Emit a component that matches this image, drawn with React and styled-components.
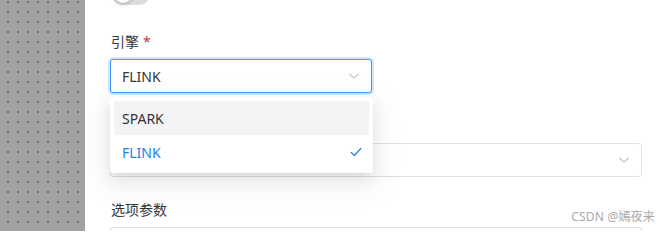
import React from "react";
import styled, { createGlobalStyle } from "styled-components";

const GlobalStyle = createGlobalStyle`
  html, body {
    margin: 0;
    padding: 0;
    width: 663px;
    height: 231px;
    overflow: hidden;
    background: #fff;
  }
  body {
    font-family: "Noto Sans", "Noto Sans CJK SC", sans-serif;
    font-size: 14px;
    color: #333639;
  }
`;

const Page = styled.div`
  display: flex;
  width: 663px;
  height: 231px;
  position: relative;
  overflow: hidden;
`;

const Backdrop = styled.div`
  width: 85px;
  flex-shrink: 0;
  background-color: #a2a2a2;
  background-image: radial-gradient(circle, #6e6e6e 0.7px, transparent 1px);
  background-size: 10px 10px;
  background-position: 3px 7px;
`;

const Panel = styled.div`
  flex: 1;
  background: #fff;
  padding: 0 21px 0 25px;
  display: flex;
  flex-direction: column;
  & > * {
    flex-shrink: 0;
  }
`;

const SwitchRail = styled.div`
  width: 38px;
  height: 22px;
  margin: -17px 0 0 2px;
  border-radius: 11px;
  background: #dcdcdf;
  position: relative;
  &::after {
    content: "";
    position: absolute;
    left: 2px;
    top: 2px;
    width: 18px;
    height: 18px;
    border-radius: 50%;
    background: #fff;
    box-shadow: 0 1px 4px rgba(0, 0, 0, 0.25);
  }
`;

const FormItem = styled.div`
  display: flex;
  flex-direction: column;
  gap: 6px;
  margin-top: ${(p) => p.$top}px;
  position: relative;
`;

const Label = styled.div`
  height: 22px;
  line-height: 22px;
  padding-left: 1px;
  font-size: 14px;
  color: #333639;
`;

const Required = styled.span`
  color: #d03050;
  margin-left: 4px;
`;

const SelectBox = styled.div`
  box-sizing: border-box;
  width: ${(p) => p.$width};
  height: 34px;
  border-radius: 3px;
  border: 1px solid ${(p) => (p.$focused ? "#4098fc" : "#e0e0e6")};
  box-shadow: ${(p) => (p.$focused ? "0 0 0 2px rgba(32,128,240,0.2)" : "none")};
  display: flex;
  align-items: center;
  justify-content: space-between;
  padding: 0 10px 0 11px;
  background: #fff;
`;

const Value = styled.span`
  font-size: 14px;
  color: #333639;
`;

const Menu = styled.div`
  position: absolute;
  top: 66px;
  left: 0;
  width: 263px;
  box-sizing: border-box;
  padding: 4px 0;
  background: #fff;
  border-radius: 3px;
  box-shadow: 0 3px 6px -4px rgba(0, 0, 0, 0.12),
    0 6px 16px 0 rgba(0, 0, 0, 0.08), 0 9px 28px 8px rgba(0, 0, 0, 0.05);
  z-index: 2;
`;

const Option = styled.div`
  height: 34px;
  display: flex;
  align-items: center;
  justify-content: space-between;
  padding: 0 10px 0 12px;
  position: relative;
  isolation: isolate;
  font-size: 14px;
  color: ${(p) => (p.$selected ? "#2080f0" : "#333639")};
  &::before {
    content: "";
    position: absolute;
    inset: 0 4px;
    border-radius: 3px;
    background: ${(p) => (p.$pending ? "#f3f3f5" : "transparent")};
    z-index: -1;
  }
`;

const Watermark = styled.div`
  position: absolute;
  right: 8px;
  bottom: 6px;
  font-size: 12px;
  color: #a9a9a9;
  letter-spacing: 0.2px;
  text-shadow: 0 0 2px #fff;
`;

const Chevron = () => (
  <svg width="14" height="14" viewBox="0 0 16 16" fill="none">
    <path d="M3 6l5 4.5L13 6" stroke="#c2c2c6" strokeWidth="1.2" strokeLinecap="round" strokeLinejoin="round" />
  </svg>
);

const Check = () => (
  <svg width="14" height="14" viewBox="0 0 16 16" fill="none">
    <path d="M2.5 8.5l3.5 3.5L13.5 4" stroke="#2080f0" strokeWidth="1.4" strokeLinecap="round" strokeLinejoin="round" />
  </svg>
);

export default function App() {
  return (
    <>
      <GlobalStyle />
      <Page>
        <Backdrop />
        <Panel>
          <SwitchRail />
          <FormItem $top={26}>
            <Label>
              引擎<Required>*</Required>
            </Label>
            <SelectBox $width="262px" $focused>
              <Value>FLINK</Value>
              <Chevron />
            </SelectBox>
            <Menu>
              <Option $pending>SPARK</Option>
              <Option $selected>
                FLINK
                <Check />
              </Option>
            </Menu>
          </FormItem>
          <FormItem $top={22}>
            <Label />
            <SelectBox $width="532px">
              <Value />
              <Chevron />
            </SelectBox>
          </FormItem>
          <FormItem $top={22}>
            <Label>选项参数</Label>
            <SelectBox $width="532px" />
          </FormItem>
        </Panel>
        <Watermark>CSDN @嫣夜来</Watermark>
      </Page>
    </>
  );
}
